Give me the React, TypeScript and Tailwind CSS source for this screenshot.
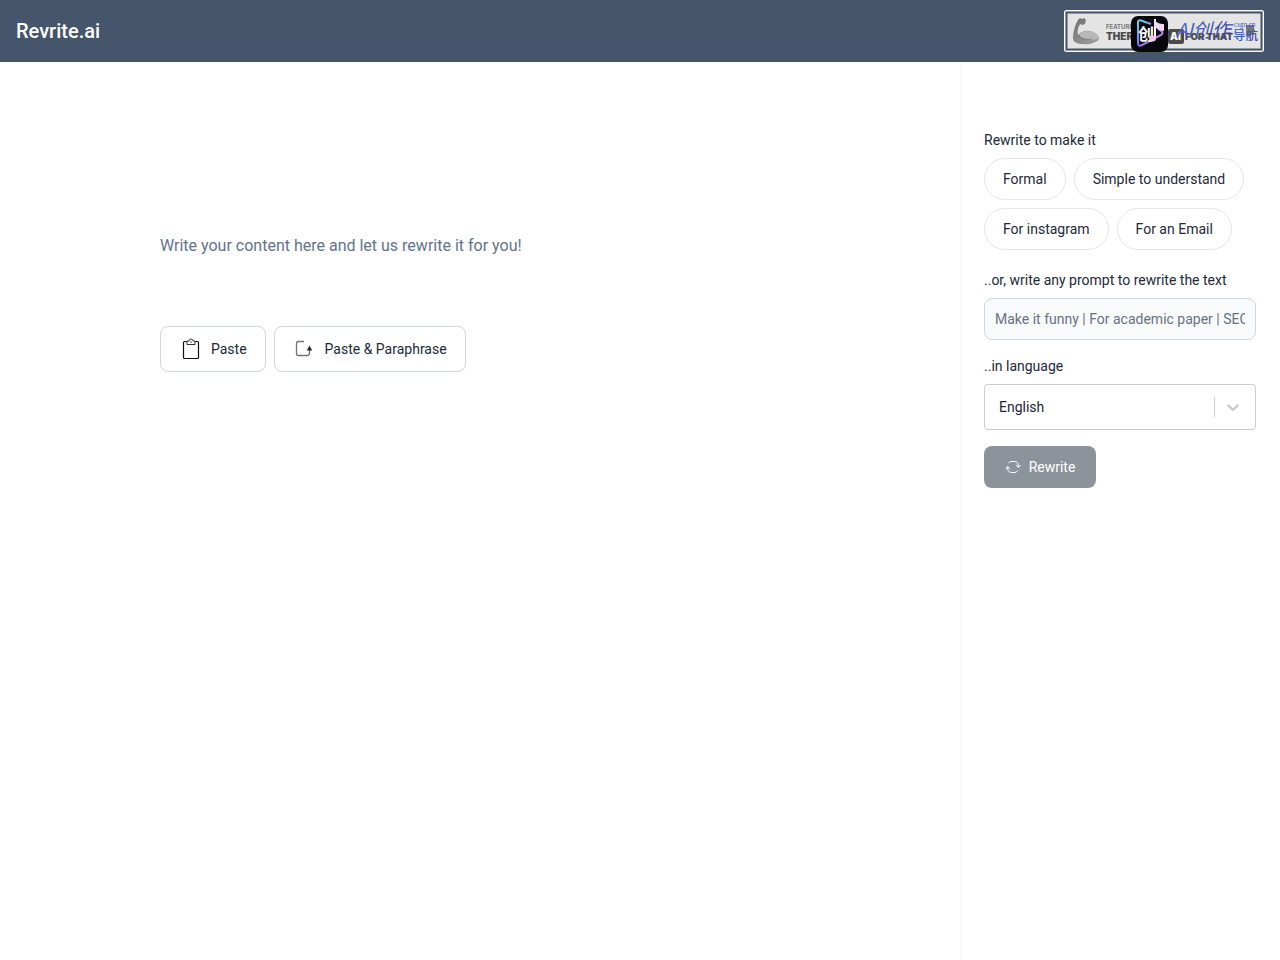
import React, { useState } from 'react';

const TONES = ['Formal', 'Simple to understand', 'For instagram', 'For an Email'];
const LANGUAGES = ['English', 'Spanish', 'French', 'German'];

function ClipboardIcon() {
  return (
    <svg className="h-6 w-6" viewBox="0 0 24 24" fill="none" aria-hidden="true">
      <rect x="4.5" y="4.5" width="15" height="17" rx="1" stroke="#111" strokeWidth="1.2" />
      <path d="M8 4v3.5h8V4h-2a2 2 0 0 0-4 0z" stroke="#333" fill="#fff" />
      <circle cx="12" cy="5" r="0.8" fill="#333" />
    </svg>
  );
}

function ParaphraseIcon() {
  return (
    <svg className="h-6 w-6" viewBox="0 0 24 24" fill="none" aria-hidden="true">
      <path d="M11 4.5H5.5A2 2 0 0 0 3.5 6.5v10A2 2 0 0 0 5.5 18.5H14a2.5 2.5 0 0 0 2.5-2.5v-3" stroke="#71717a" strokeWidth="1.3" />
      <path d="M16.5 8.5l2.7 5h-5.4z" fill="#27272a" />
    </svg>
  );
}

function RefreshIcon() {
  return (
    <svg className="h-4 w-4" viewBox="0 0 16 16" fill="none" stroke="currentColor" strokeWidth="1" strokeLinecap="round" strokeLinejoin="round" aria-hidden="true">
      <path d="M3.500 4C4.300 3 5.500 2.500 7 2.500h2.500C12 2.500 13.400 4.300 13.400 6.500V8" />
      <path d="M12.500 12c-.8 1-2 1.500-3.500 1.500H6.500C4 13.500 2.600 11.700 2.600 9.500V8" />
      <path d="M11.200 6.300l2.200 2 2-2M.6 9.700l2-2 2.200 2" />
    </svg>
  );
}

function FeaturedBadge() {
  return (
    <svg className="h-[42px] w-[200px]" viewBox="0 0 200 42" role="img" aria-label="Featured on There's an AI for that">
      <defs>
        <linearGradient id="neon" x1="0" y1="0" x2="1" y2="1">
          <stop offset="0" stopColor="#5ee0e8" />
          <stop offset="0.5" stopColor="#8b6cf0" />
          <stop offset="1" stopColor="#f2a0e0" />
        </linearGradient>
        <linearGradient id="ink" x1="0" y1="0" x2="1" y2="1">
          <stop offset="0" stopColor="#4a7fd0" />
          <stop offset="1" stopColor="#3d2f9c" />
        </linearGradient>
        <linearGradient id="arm" x1="0" y1="0" x2="1" y2="1">
          <stop offset="0" stopColor="#6f6f6f" />
          <stop offset="1" stopColor="#a3a3a3" />
        </linearGradient>
      </defs>
      <rect x="0.5" y="0.5" width="199" height="41" rx="1.5" fill="#e4e4e5" stroke="#f8fafc" />
      <rect x="2.5" y="2.5" width="195" height="37" fill="#e4e4e5" stroke="#475569" strokeWidth="2" />

      {/* flexed arm */}
      <path d="M14 10l2-2 2 1 2-1 2 2-1 4-3 1-2-1c-2 4-3 7-2 11 3-3 7-5 11-4 6 1 10 4 10 8-2 4-11 6-16 5-6 0-10-2-10-6 0-6 2-13 5-18z" fill="url(#arm)" />
      <path d="M15 25c3-3 7-5 11-4 5 1 8 3 9 7-6 3-16 3-20-3" fill="#b8b8b8" />
      <path d="M14 25c3 4 8 5 14 4" fill="none" stroke="#666" strokeWidth="0.7" />

      <g fontFamily="Inter, sans-serif" fontWeight="900" fill="#4b4b4b">
        <text x="42" y="19" fontSize="6" fontWeight="700" fill="#777">FEATURE</text>
        <text x="42" y="30" fontSize="10">THER</text>
        <rect x="104" y="19" width="16" height="15" rx="2" />
        <text x="106" y="30" fontSize="10" fill="#fff">AI</text>
        <text x="121" y="30" fontSize="9.5">FOR THAT</text>
      </g>
      <rect x="182" y="15" width="8" height="10" fill="#777" />

      {/* partner mark */}
      <rect x="67" y="6" width="37" height="36" rx="7" fill="#08080c" />
      <path d="M87 14L77 10.500q-3-1-3 2V33q0 4 4 2l19-10q3-2 0-4l-3-2" fill="none" stroke="url(#neon)" strokeWidth="2" />
      <text x="74" y="30" fontSize="16" fontWeight="700" fill="#fff" fontFamily="'Noto Sans CJK SC', sans-serif">创</text>
      <path d="M91 9v19" stroke="#fff" strokeWidth="2" />
      <path d="M90 9c2 4 6 5 10 5v7c-4 0-7-2-10-5z" fill="#f5d8f7" />
      <ellipse cx="88.500" cy="28.500" rx="3.500" ry="3" fill="#f5c4ee" />
      <g fontFamily="'Noto Sans CJK SC', sans-serif" fill="url(#ink)">
        <text x="112" y="27" fontSize="19" fontStyle="italic">AI创作</text>
        <text x="170" y="17" fontSize="6">cxgn.cn</text>
        <text x="169" y="30" fontSize="12.5" fontWeight="500">导航</text>
      </g>
    </svg>
  );
}

export default function App() {
  const [content, setContent] = useState('');
  const [prompt, setPrompt] = useState('');
  const [language, setLanguage] = useState('English');

  return (
    <div className="flex min-h-screen flex-col bg-white font-[Roboto,sans-serif] text-sm text-gray-800">
      <header className="flex items-center justify-between bg-slate-600 px-4 py-2.5">
        <a href="#" className="text-xl font-medium text-white">Revrite.ai</a>
        <a href="#"><FeaturedBadge /></a>
      </header>

      <div className="flex flex-1">
        <main className="flex-1 pt-40">
          <div className="mx-auto w-2/3">
            <textarea
              aria-label="Content"
              rows={1}
              value={content}
              onChange={(e) => setContent(e.target.value)}
              placeholder="Write your content here and let us rewrite it for you!"
              className="block h-26 w-full resize-none pt-3 text-base leading-6 outline-none placeholder:text-slate-500"
            />
            <div className="flex gap-2">
              <button className="flex items-center gap-2 rounded-lg border border-gray-300 px-4.5 py-2.5">
                <ClipboardIcon />
                Paste
              </button>
              <button className="flex items-center gap-2 rounded-lg border border-gray-300 px-4.5 py-2.5">
                <ParaphraseIcon />
                Paste &amp; Paraphrase
              </button>
            </div>
          </div>
        </main>

        <aside className="w-80 border-l-2 border-neutral-50 pt-17 pr-6 pl-5.5">
          <p className="mb-2">Rewrite to make it</p>
          <div className="mb-5 flex flex-wrap gap-2">
            {TONES.map((tone) => (
              <button key={tone} className="rounded-full border border-gray-200 px-4.5 py-2.5">
                {tone}
              </button>
            ))}
          </div>

          <label htmlFor="prompt" className="mb-2 block">..or, write any prompt to rewrite the text</label>
          <input
            id="prompt"
            value={prompt}
            onChange={(e) => setPrompt(e.target.value)}
            placeholder="Make it funny | For academic paper | SEO"
            className="mb-4 w-full rounded-lg border border-gray-300 bg-slate-50 p-2.5 placeholder:text-gray-500"
          />

          <label htmlFor="language" className="mb-2 block">..in language</label>
          <div className="relative mb-4">
            <select
              id="language"
              value={language}
              onChange={(e) => setLanguage(e.target.value)}
              className="block h-[46px] w-full appearance-none rounded border border-[#ccc] bg-white px-3.5"
            >
              {LANGUAGES.map((name) => (
                <option key={name}>{name}</option>
              ))}
            </select>
            <div className="pointer-events-none absolute inset-y-3 right-[13px] flex items-center gap-2 text-[#ccc]">
              <span className="h-5 w-px bg-[#ccc]" />
              <svg className="h-5 w-5" viewBox="0 0 20 20" fill="currentColor" aria-hidden="true">
                <path d="M4.516 7.548c0.436-0.446 1.043-0.481 1.576 0l3.908 3.747 3.908-3.747c0.533-0.481 1.141-0.446 1.574 0 0.436 0.445 0.408 1.197 0 1.615-0.406 0.418-4.695 4.502-4.695 4.502-0.217 0.223-0.502 0.335-0.787 0.335s-0.570-0.112-0.789-0.335c0 0-4.287-4.084-4.695-4.502s-0.436-1.170 0-1.615z" />
              </svg>
            </div>
          </div>

          <button disabled className="flex min-w-28 items-center justify-center gap-2 rounded-lg bg-gray-800 px-4.5 py-[11px] text-white opacity-50">
            <RefreshIcon />
            Rewrite
          </button>
        </aside>
      </div>
    </div>
  );
}
